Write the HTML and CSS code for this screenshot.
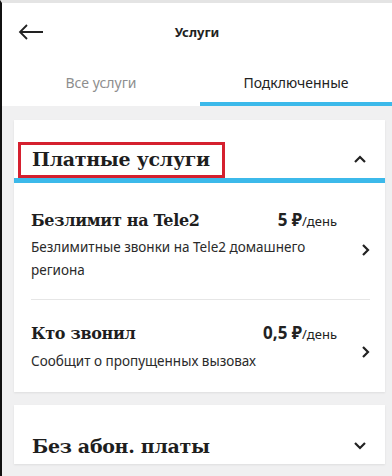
FILE: index.html
```html
<!DOCTYPE html>
<html lang="ru">
<head>
<meta charset="utf-8">
<link rel="stylesheet" href="styles.css">
</head>
<body>
<div class="screen">
  <header class="topbar">
    <svg class="back" width="26" height="16" viewBox="0 0 26 16"><path d="M25 8H2M9 1L2 8l7 7" fill="none" stroke="#222" stroke-width="1.8"/></svg>
    <div class="title">Услуги</div>
  </header>
  <nav class="tabs">
    <div class="tab">Все услуги</div>
    <div class="tab active">Подключенные</div>
  </nav>
  <main class="content">
    <section class="card">
      <div class="group-head open">
        <span class="group-title marked">Платные услуги</span>
        <svg class="chev" width="14" height="10" viewBox="0 0 14 10"><path d="M2 8l5-5 5 5" fill="none" stroke="#222" stroke-width="2.2"/></svg>
      </div>
      <div class="item">
        <div class="item-main">
          <div class="item-top">
            <span class="item-name">Безлимит на Tele2</span>
            <span class="price"><b>5 ₽</b>/день</span>
          </div>
          <div class="item-desc">Безлимитные звонки на Tele2 домашнего региона</div>
        </div>
        <svg class="arrow" width="10" height="14" viewBox="0 0 10 14"><path d="M3 2l5 5-5 5" fill="none" stroke="#222" stroke-width="2.2"/></svg>
      </div>
      <div class="item">
        <div class="item-main">
          <div class="item-top">
            <span class="item-name">Кто звонил</span>
            <span class="price"><b>0,5 ₽</b>/день</span>
          </div>
          <div class="item-desc">Сообщит о пропущенных вызовах</div>
        </div>
        <svg class="arrow" width="10" height="14" viewBox="0 0 10 14"><path d="M3 2l5 5-5 5" fill="none" stroke="#222" stroke-width="2.2"/></svg>
      </div>
    </section>
    <section class="card closed">
      <div class="group-head">
        <span class="group-title">Без абон. платы</span>
        <svg class="chev" width="14" height="10" viewBox="0 0 14 10"><path d="M2 2l5 5 5-5" fill="none" stroke="#222" stroke-width="2.2"/></svg>
      </div>
    </section>
  </main>
</div>
</body>
</html>
```
FILE: styles.css
```css
* { box-sizing: border-box; }
html, body { margin: 0; padding: 0; }
body {
  width: 392px;
  height: 476px;
  overflow: hidden;
  font-family: "Noto Sans", "Open Sans", sans-serif;
  color: #222;
  background: #f3f3f4;
}
.screen {
  height: 476px;
  border-left: 2px solid #111;
  border-top: 3px solid #e4e4e4;
  background: #f0f0f1;
}
.topbar {
  height: 57px;
  background: #fff;
  display: flex;
  align-items: center;
  justify-content: center;
  position: relative;
}
.back { position: absolute; left: 16px; top: 21px; }
.title {
  font-weight: 700;
  font-size: 13px;
  margin-top: 1px;
}
.tabs {
  display: grid;
  grid-template-columns: 198px 1fr;
  background: #fff;
  height: 46px;
}
.tab {
  display: flex;
  align-items: center;
  justify-content: center;
  font-size: 14px;
  color: #8e8e8e;
  padding-bottom: 2px;
}
.tab.active {
  color: #222;
  border-bottom: 4px solid #3cb9ea;
  padding-top: 4px;
}
.content {
  padding: 14px 7px 0 12px;
  display: flex;
  flex-direction: column;
  gap: 13px;
}
.card {
  background: #fff;
  box-shadow: 0 1px 2px rgba(0,0,0,0.08);
}
.group-head {
  display: flex;
  align-items: center;
  justify-content: space-between;
  padding: 22px 18px 0 4px;
  height: 63px;
  border-bottom: 5px solid #3cb9ea;
}
.group-title {
  font-family: "DejaVu Serif", serif;
  font-weight: 700;
  font-size: 19px;
  color: #1e1e1e;
  letter-spacing: -0.3px;
  padding: 2px 12px 3px 11px;
  border: 3px solid transparent;
  line-height: 25px;
}
.group-title.marked { border-color: #d5202f; }
.card.closed .group-head {
  height: 59px;
  padding-top: 24px;
  border-bottom: 0;
  overflow: hidden;
}
.chev { margin-top: -2px; }
.item {
  display: flex;
  align-items: center;
  margin: 0 15px 0 17px;
  padding: 25px 0 17px;
}
.item + .item { border-top: 1px solid #e6e6e6; padding-top: 21px; padding-bottom: 19px; }
.item-main { flex: 1; }
.item-top {
  display: flex;
  justify-content: space-between;
  align-items: baseline;
  padding-right: 19px;
}
.item-name {
  font-family: "DejaVu Serif", serif;
  font-weight: 700;
  font-size: 16px;
  letter-spacing: -0.3px;
  color: #1e1e1e;
}
.price { font-size: 13px; color: #222; }
.price b { font-size: 17px; font-weight: 700; }
.item-desc {
  font-size: 13.5px;
  line-height: 23px;
  color: #2a2a2a;
  margin-top: 5px;
  padding-right: 30px;
}
.item + .item .item-desc { margin-top: 6px; }
.arrow { flex: none; margin-left: 4px; margin-top: 10px; }
```
